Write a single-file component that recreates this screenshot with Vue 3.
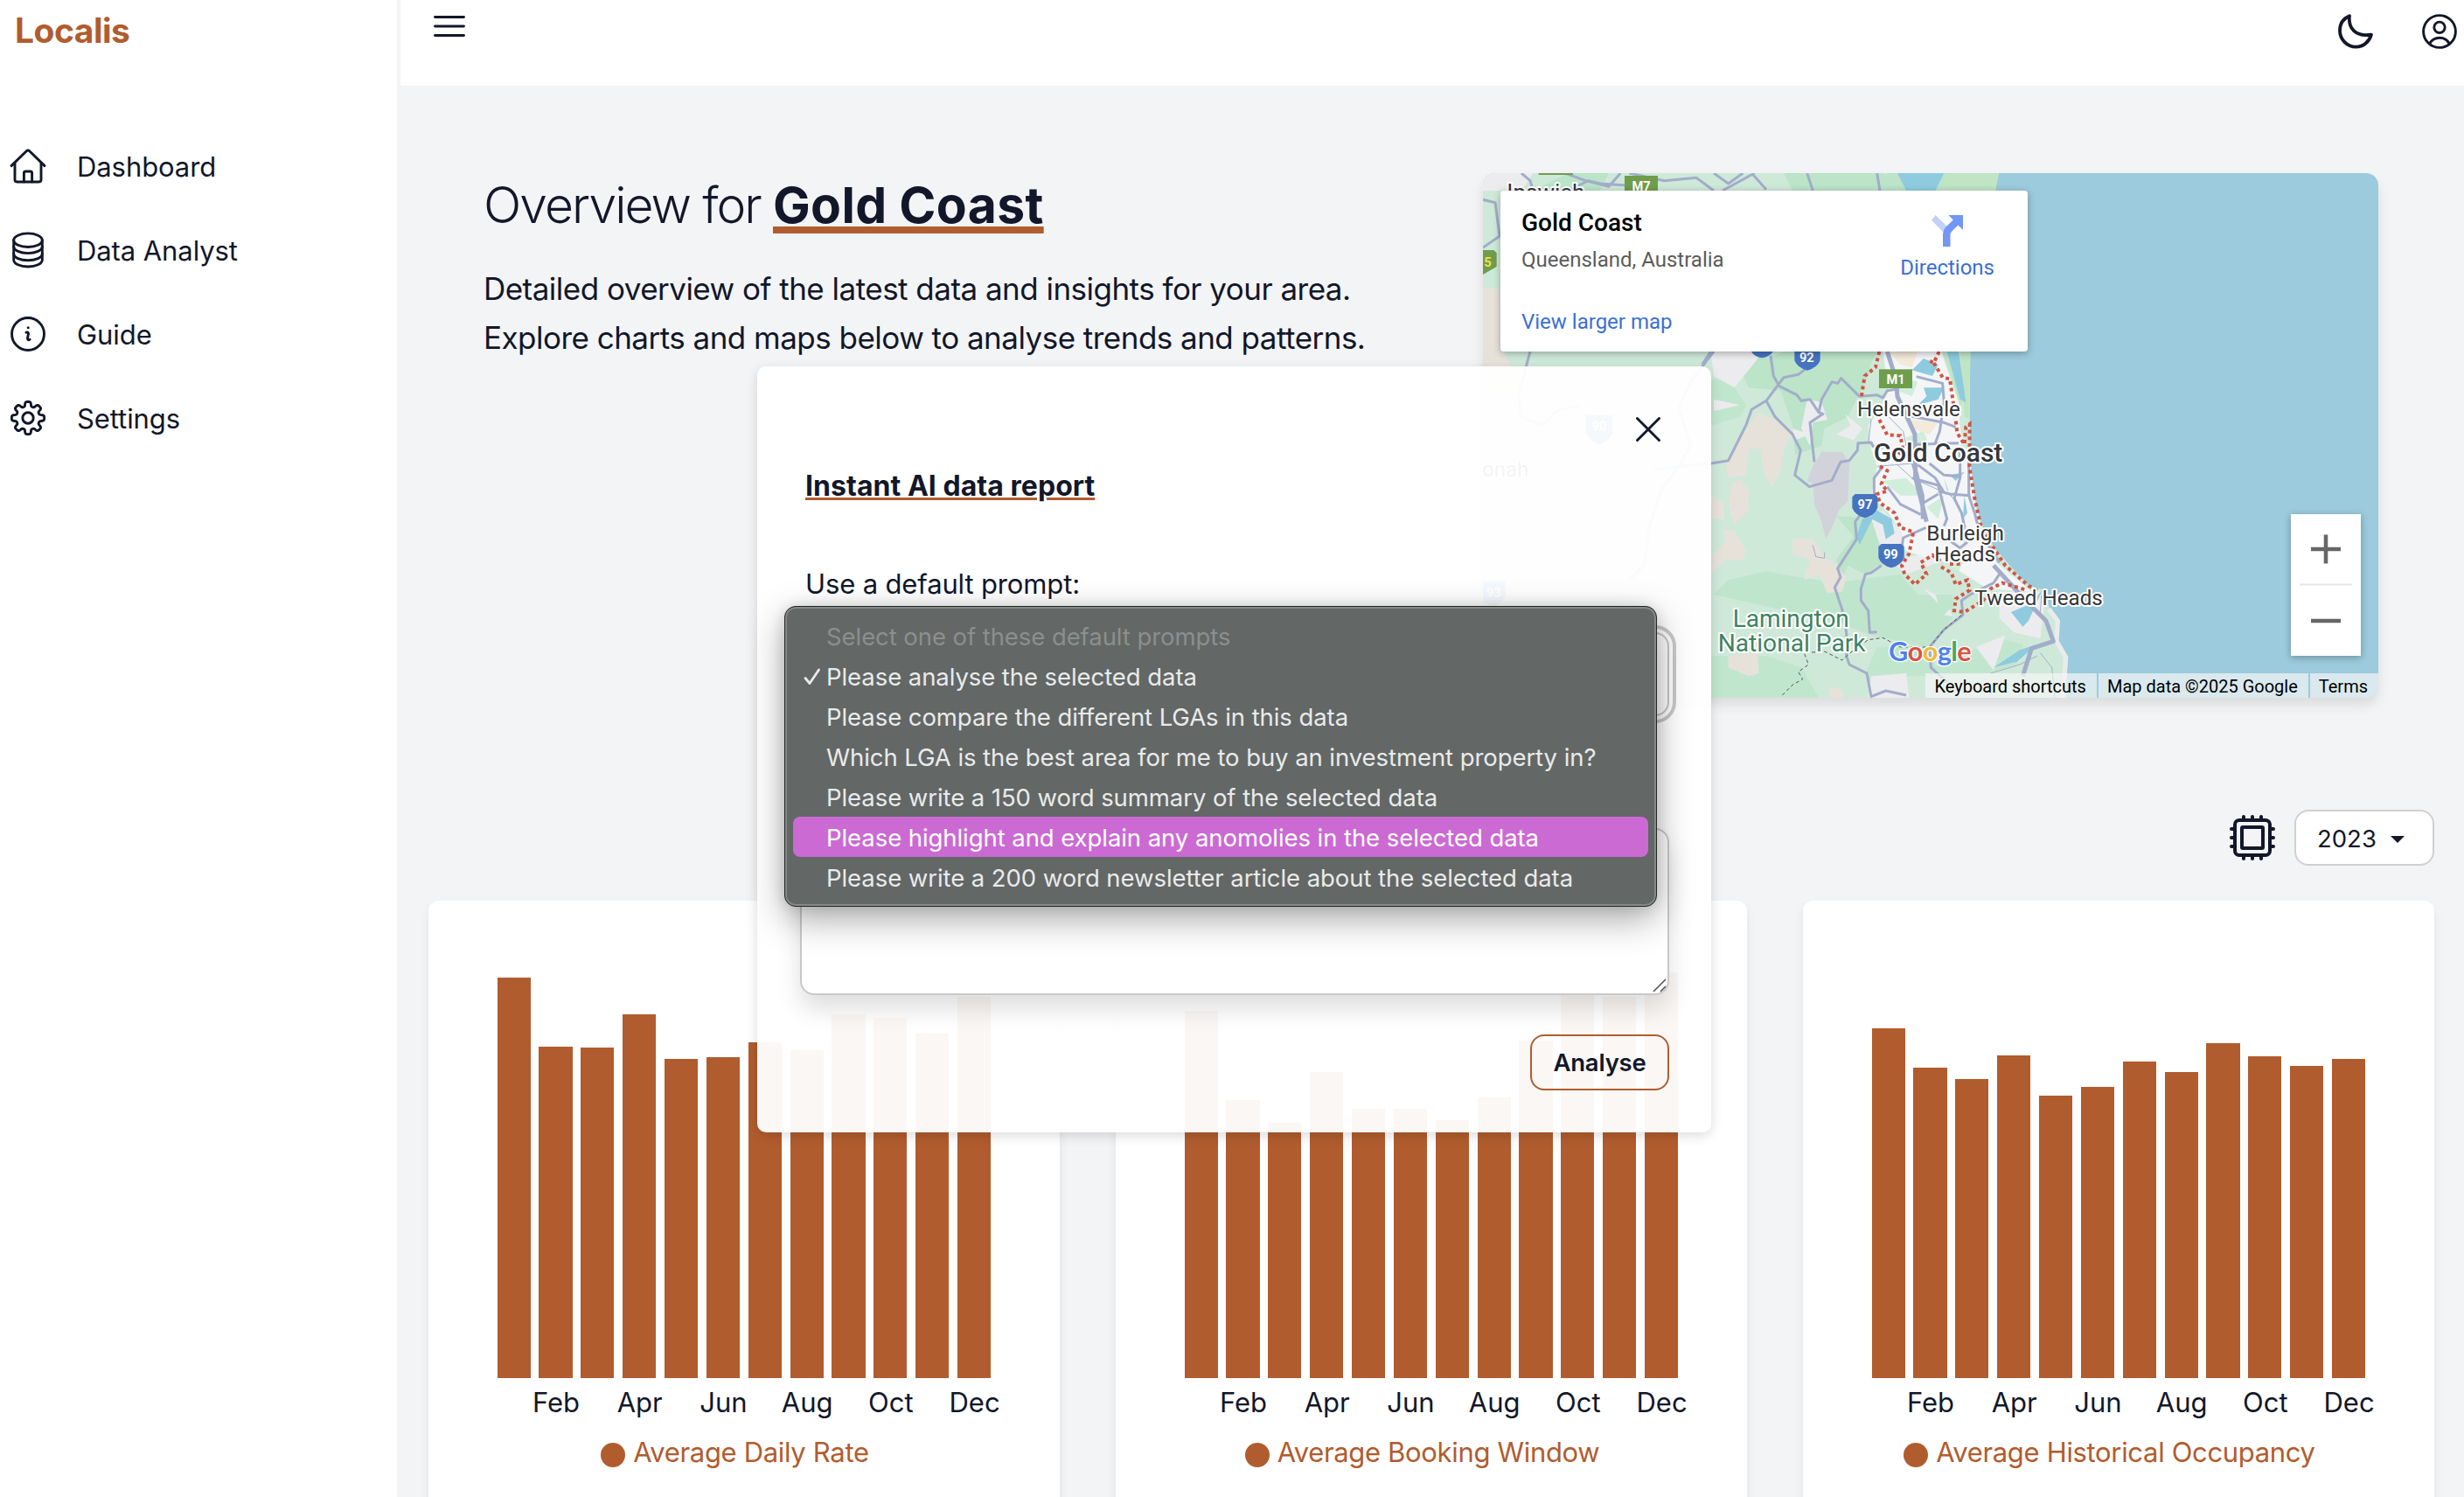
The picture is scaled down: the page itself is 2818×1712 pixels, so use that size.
<script setup>
const navItems = [
  { label: 'Dashboard', icon: 'home' },
  { label: 'Data Analyst', icon: 'database' },
  { label: 'Guide', icon: 'info' },
  { label: 'Settings', icon: 'gear' },
]

// Closed outline of an eight-toothed cog, centred in a 48-unit box.
const gearPath = (() => {
  const points = []
  for (let i = 0; i < 128; i++) {
    const a = (i / 128) * Math.PI * 2
    const r = 16 + 2.6 * Math.tanh(2.4 * (Math.cos(8 * a) + 0.15))
    points.push(`${(24 + r * Math.cos(a)).toFixed(2)} ${(24 + r * Math.sin(a)).toFixed(2)}`)
  }
  return `M${points.join('L')}Z`
})()

const months = ['', 'Feb', '', 'Apr', '', 'Jun', '', 'Aug', '', 'Oct', '', 'Dec']

const charts = [
  { title: 'Average Daily Rate', values: [458, 379, 378.5, 416, 365.5, 367, 384, 375, 416, 412, 394, 436] },
  { title: 'Average Booking Window', values: [420.5, 318.5, 292, 350, 308, 308, 295, 321, 386.5, 446, 436.5, 464.5] },
  { title: 'Average Historical Occupancy', values: [400.5, 355, 342, 369, 323.5, 333, 362, 350.5, 383, 368, 357, 365.5] },
]

const prompts = [
  { text: 'Select one of these default prompts', disabled: true },
  { text: 'Please analyse the selected data', checked: true },
  { text: 'Please compare the different LGAs in this data' },
  { text: 'Which LGA is the best area for me to buy an investment property in?' },
  { text: 'Please write a 150 word summary of the selected data' },
  { text: 'Please highlight and explain any anomolies in the selected data', active: true },
  { text: 'Please write a 200 word newsletter article about the selected data' },
]
</script>

<template>
  <div class="app">
    <aside class="sidebar">
      <div class="brand">Localis</div>
      <nav class="nav">
        <a v-for="item in navItems" :key="item.label" class="nav-item">
          <svg class="nav-icon" viewBox="0 0 48 48">
            <template v-if="item.icon === 'home'">
              <path d="M5 23.6 22.3 6.7q1.7-1.5 3.4 0L43 23.6" />
              <path d="M9 20.5V39.6q0 2.4 2.4 2.4H36.6q2.4 0 2.4-2.4V20.5" />
              <path d="M19.4 42V32q0-2 2-2h5.2q2 0 2 2V42" />
            </template>
            <template v-else-if="item.icon === 'database'">
              <ellipse cx="24" cy="12.7" rx="16.3" ry="7.8" />
              <path d="M7.7 12.7V35.2A16.3 7.8 0 0 0 40.3 35.2V12.7" />
              <path d="M7.7 20A16.3 7.6 0 0 0 40.3 20M7.7 28.2A16.3 7.6 0 0 0 40.3 28.2" />
            </template>
            <template v-else-if="item.icon === 'info'">
              <circle cx="24" cy="24" r="18.5" />
              <circle class="solid" cx="24.2" cy="16.8" r="1.5" />
              <path d="M22 22.2c1.6-.7 2.9 0 2.5 1.8l-1 4.6c-.3 1.9.9 2.6 2.6 1.7" />
            </template>
            <template v-else>
              <path :d="gearPath" />
              <circle cx="24" cy="24" r="6.2" />
            </template>
          </svg>
          <span>{{ item.label }}</span>
        </a>
      </nav>
    </aside>

    <div class="page">
      <header class="topbar">
        <svg class="menu" viewBox="0 0 36 26">
          <path d="M1.5 2.5H34.5M1.5 13H34.5M1.5 23.5H34.5" />
        </svg>
        <div class="top-actions">
          <svg class="top-icon moon" viewBox="0 0 40 40">
            <path d="M13 2.2C11.4 16 19.5 26.4 38 23.6 35.4 32 28.8 37.7 20.5 37.7A18.6 18.6 0 0 1 2 19C2 11.2 6.3 5 13 2.2Z" />
          </svg>
          <svg class="top-icon" viewBox="0 0 40 40">
            <circle cx="20" cy="20" r="18.4" />
            <circle cx="20" cy="15.3" r="6.2" />
            <path d="M8.6 34C11 29.4 15 27.2 20 27.2S29 29.4 31.4 34" />
          </svg>
        </div>
      </header>

      <main>
        <section class="hero">
          <div class="intro">
            <h1><span class="light">Overview for </span><span class="place">Gold Coast</span></h1>
            <p>Detailed overview of the latest data and insights for your area.<br />Explore charts and maps below to analyse trends and patterns.</p>
          </div>

          <div class="map">
            <svg class="map-art" viewBox="-732 -546 3072 1800" preserveAspectRatio="none">
              <rect x="-732" y="-546" width="3072" height="1800" fill="#9bcbdc" />
              <path class="land" d="M-732-546H1038L990-300 965-100 940 66 938 290 938 310 942 450 958 590 985 670 1020 735 1080 805 1140 868 1195 885 1212 945 1235 990 1242 1060 1275 1115 1268 1254H-732Z" />
              <g fill="#bbe4c9">
                <path d="M120 66 250 90 300 66H560L600 130 560 210 520 290 440 330 430 390 340 420 330 320 290 200 180 190Z" />
                <path d="M300 66H620L560 190 480 160 440 250 400 260 350 220 280 170Z" />
                <path d="M480 630 640 640 720 700 700 790 620 800 580 830 520 800 500 850 480 780 540 700Z" />
                <path d="M240 820 470 860 700 830 760 900 880 900 880 980 790 1080 600 1040 500 1000 330 960 60 900 110 850Z" opacity=".8" />
                <path d="M620 1080 800 1080 820 1150 1040 1050 1120 1070 1100 1140 1000 1170 720 1180 600 1240 580 1170Z" opacity=".7" />
                <path d="M50 320 150 290 170 250 120 170 50 160Z" opacity=".7" />
                <path d="M52 1110 240 1110 360 1150 420 1254H52Z" opacity=".7" />
                <path d="M-440-546-300-546-330-486H-560ZM300-546 640-546 760-486H330ZM650-546 860-546V-486H700Z" />
                <path d="M620 300 700 350 710 380 640 420 600 380Z" />
                <path d="M640 510 740 510 800 600 740 600 700 560Z" />
              </g>
              <g fill="#ececee">
                <path d="M50 66H230L180 130 130 190 60 150Z" />
                <path d="M380 230 430 240 450 300 400 310 390 390 360 330ZM330 330 390 350 340 370ZM510 280 570 330 540 370 480 350 530 320Z" />
                <path d="M600 640 640 610 700 680 720 740 690 780 780 760 830 790 720 830 640 760ZM780 880 830 930 820 900ZM850 970 870 950 880 975ZM60 230 150 250 60 270Z" />
                <path d="M-732-546H-560L-600-486H-732Z" />
                <path d="M1040 890 1200 890 1180 1050 1090 1030 1040 980ZM960 1080 1060 1040 1020 1160ZM600 1180 720 1170 730 1254H590Z" />
              </g>
              <path fill="#d2d3da" d="M430 410 500 410 525 450 520 580 490 610 470 660 445 710 430 650 405 590 400 520 380 510 400 460Z" />
              <g fill="#e6e2da">
                <path d="M210 275 270 300 330 350 300 400 290 470 260 530 230 480 220 400 180 400 170 490 110 500 100 450 160 350Z" />
                <path d="M150 505 180 540 180 610 130 660 110 590 120 520ZM330 710 400 710 440 770 480 800 515 840 500 890 450 895 420 830 370 850 390 780 330 760ZM95 680 130 680 170 750 160 780 100 780 50 830 50 770 100 720Z" />
                <path d="M110 1110 210 1100 215 1170 180 1180 110 1150ZM455 1220 490 1220 510 1254H460ZM50 560 90 580 95 640 55 640Z" />
                <path d="M-732-150H-640L-660 66-600 200H-732Z" />
              </g>
              <path fill="#f4f5f7" d="M640 66H840L900 240 905 330 940 450 960 600 985 690 1030 790 1080 830 1150 890 1000 880 920 830 860 790 780 770 720 750 700 680 660 620 600 560 620 460 600 400 590 320 620 280 660 200Z" />
              <g fill="#cfeedb">
                <path d="M690 150 760 170 740 220 690 200ZM720 360 780 340 800 390 720 400ZM640 510 720 500 780 560 700 560ZM790 600 850 560 830 640ZM870 400 930 380 900 440ZM840 760 930 760 900 820Z" />
              </g>
              <path fill="#f3ead9" d="M660 66 760 66 740 120 700 110ZM730 300 830 310 800 350 740 330Z" />
              <path fill="#bfe5c5" d="M845 66H885L925 230 905 250ZM905 66H941L934 295 920 290ZM860-546H1038L1025-486H840Z" />
              <g fill="#8fcbdf">
                <path d="M780 90 830 110 810 150 740 130ZM780 190 850 190 830 230 760 250 790 220ZM600 600 670 640 680 690 650 710 640 660 600 640ZM570 640 610 630 560 730 550 700Z" />
                <path d="M690-546H850L820-486H720ZM860 66 900 66 925 240 905 230ZM850 500 870 560 900 590 860 540ZM920 560 930 620 915 640Z" />
                <path d="M1080 960 1150 930 1190 880 1140 990 1120 1010ZM1110 1090 1170 1070 1100 1130 1020 1150ZM870 490 920 480 890 510Z" />
              </g>
              <path fill="none" stroke="#e9ebec" stroke-width="16" d="M1210 950 1240 990 1236 1060 1268 1115 1256 1254" />

              <g class="road thin">
                <path d="M660 290 710 340 720 390M690 455 740 500 830 540M1010 1170 1110 1140 1170 1110M1180 1100 1220 1150 1230 1254M400 730 410 770 440 775 440 755M1185 900 1180 960 1215 1010" />
                <path d="M600 300 590 380 640 400M620 460 680 455 740 450" />
              </g>
              <g class="road">
                <path d="M50 66 20 110M255 80 265 150 285 185 345 215 360 235 390 230 420 275 435 280 390 310 400 400 405 445" />
                <path d="M395 110 350 145 300 155 240 235 190 265 170 320 110 440 50 450-150 470" />
                <path d="M240 235 270 290 330 350 358 405 338 490 388 530 465 508 495 445 525 440 553 405 555 380 600 378 608 395" />
                <path d="M420 275 430 230 465 170 485 175 497 158 560 220 620 215 640 225 655 200 690 195M755 152 845 175 850 240 835 340 820 380M720 285 850 310 890 325" />
                <path d="M640 460 610 500 610 560 560 630 545 650 550 710 485 810 495 840 475 875 500 950 515 1030 515 1110 525 1140 585 1170 600 1250 650 1230 720 1245" />
                <path d="M635 800 600 825 580 830 565 880 565 920 590 955 595 1030 620 1028" />
                <path d="M655 530 700 590 770 625M740 500 830 525 860 640 850 665M800 450 850 490 910 495M830 545 870 555 940 560M780 585 830 555M905 400 905 500 885 570 910 620 920 665 915 720" />
                <path d="M788 670 710 705 705 740M870 715 905 740 930 720M1040 830 1020 860 940 900 910 920 915 970 850 1020 800 1080 805 1150 860 1200" />
                <path d="M935 400V560L955 620 970 680 1040 790M760 455 820 500 850 550M750 385 900 380" />
                <path d="M-600-546-570-520-560-486M-450-546-380-520-300-500-260-546M-230-546-110-520 0-530 60-486M60-546 110-510 160-546M190-546 240-490M380-546 400-486M620-546 630-486M-440-486-370-520-330-510-180-500M90-486 200-546" />
                <path d="M-732-455-690-445-675-330-732-290M-570 66-590 140-610 220-600 290-530 320-480 270-400 250M60 66-20 170-60 260-20 390-60 460-120 540-160 660-180 800-230 850" />
              </g>
              <g class="road thick">
                <path d="M655 66 685 160 690 220 750 350 752 500 790 650M745 450 775 560 778 640M1020 800 1130 920 1200 990 1225 1060 1150 1085 1120 1180" />
              </g>
              <g class="border-line">
                <path d="M628 66 615 120 578 150 565 230M628 300 655 352 700 355 708 395 695 420M630 460 655 475 635 520 655 545 620 555 630 585 680 620 700 670 745 685 730 760 705 800 715 830 750 865 790 830 770 790 810 765 845 790M840 805 875 825 890 865 930 850 938 885 890 915 885 955 920 960 985 920 1010 880 1050 860 1135 885" />
                <path d="M833 66 815 105 795 95M815 105 845 155 870 160 890 300 895 345 920 385 925 325 938 315 937 460 955 570 975 660 1020 740 1060 800 1140 870 1180 890M905 795 860 795" />
              </g>
              <path fill="none" stroke="#4e5a54" stroke-width="3" stroke-dasharray="12 9" d="M295 1245 330 1210 365 1190 350 1165 385 1140 370 1100 440 1095 500 1125 540 1090 590 1055 640 1048 700 1080 800 1080 850 1020 910 970" />

              <g class="shield">
                <path d="M535 565 545 555H612L622 565V602Q612 628 579 637 545 628 535 602Z" />
                <path d="M625 736 635 726H703L713 736V773Q703 799 669 808 635 799 625 773Z" />
                <path d="M337 50H425V97Q415 122 381 131 347 122 337 97ZM190 40H262V68Q250 84 226 88 200 84 190 68Z" />
                <path d="M-378 285H-288V345Q-298 375-333 385-368 375-378 345ZM-732 855H-655V905Q-665 930-695 940-732 930-732 915Z" />
              </g>
              <g class="motorway">
                <rect x="627" y="127" width="114" height="65" />
                <rect x="-246" y="-537" width="114" height="65" />
                <rect x="-541" y="-560" width="118" height="20" />
                <path d="M-732-282H-695L-685-272V-225L-732-198Z" />
              </g>
              <g class="shield-text">
                <text x="579" y="607">97</text>
                <text x="667" y="777">99</text>
                <text x="379" y="101">92</text>
                <text x="-333" y="336">90</text>
                <text x="-695" y="908">93</text>
                <text x="684" y="178">M1</text>
                <text x="-189" y="-487">M7</text>
                <text class="yellow" x="-716" y="-226">5</text>
              </g>
              <g class="label">
                <text x="-650" y="-453" font-size="78">Ipswich</text>
                <text x="552" y="287" font-size="72.500">Helensvale</text>
                <text x="790" y="714" font-size="73">Burleigh</text>
                <text x="817" y="787" font-size="73">Heads</text>
                <text x="955" y="937" font-size="72.500">Tweed Heads</text>
                <text x="-735" y="495" font-size="72">onah</text>
                <text class="city" x="608" y="443" font-size="90">Gold Coast</text>
                <text class="park" x="125" y="1010" font-size="84">Lamington</text>
                <text class="park" x="74" y="1094" font-size="84.500">National Park</text>
              </g>
              <text class="google" x="660" y="1128" textLength="284"><tspan fill="#4f82ec">G</tspan><tspan fill="#dc5143">o</tspan><tspan fill="#edb83d">o</tspan><tspan fill="#4f82ec">g</tspan><tspan fill="#4ba659">l</tspan><tspan fill="#dc5143">e</tspan></text>
            </svg>

            <div class="place-card">
              <div class="place-info">
                <strong>Gold Coast</strong>
                <span class="region">Queensland, Australia</span>
                <a>View larger map</a>
              </div>
              <div class="directions">
                <svg viewBox="0 0 36 36">
                  <path fill="#c2d1fb" d="M4.6 0 0 5.8 13.4 19.5 18.5 13.6Z" />
                  <path fill="#7297f4" d="M13 36V24C13 18.5 14.5 15.5 18 12L24.8 5.5 19.4 0H36V17L30.5 11.4 24 17.8C22 19.8 21.5 21 21.5 24V36Z" />
                </svg>
                <a>Directions</a>
              </div>
            </div>

            <div class="zoom">
              <svg viewBox="0 0 80 162">
                <path stroke="#666" stroke-width="4.500" d="M23 40H57M40 23.5V56.5M23 122H57" />
                <path stroke="#e6e6e6" stroke-width="2" d="M10 80.5H70" />
              </svg>
            </div>

            <div class="map-footer">
              <span>Keyboard shortcuts</span><span>Map data ©2025 Google</span><span>Terms</span>
            </div>
          </div>
        </section>

        <section class="toolbar">
          <svg class="chip" viewBox="-26 -26 52 52">
            <rect x="-20" y="-20" width="40" height="40" rx="5" />
            <rect x="-12" y="-12" width="24" height="24" rx="1" />
            <path d="M-10-21V-24M0-21V-24M10-21V-24M-10 21V24M0 21V24M10 21V24M-21-10H-24M-21 0H-24M-21 10H-24M21-10H24M21 0H24M21 10H24" />
          </svg>
          <div class="year">
            <span>2023</span>
            <svg viewBox="0 0 16 8"><path d="M0 0H16L8 8Z" /></svg>
          </div>
        </section>

        <section class="charts">
          <article v-for="chart in charts" :key="chart.title" class="chart">
            <div class="bars">
              <div v-for="(v, i) in chart.values" :key="i" class="bar" :style="{ height: v + 'px' }"></div>
            </div>
            <div class="months">
              <span v-for="(m, i) in months" :key="i">{{ m }}</span>
            </div>
            <div class="legend"><i></i>{{ chart.title }}</div>
          </article>
        </section>
      </main>
    </div>

    <div class="modal">
      <div class="modal-head">
        <svg class="close" viewBox="0 0 28 28"><path d="M1.5 1.5 26.5 26.5M26.5 1.5 1.5 26.5" /></svg>
      </div>
      <h2>Instant AI data report</h2>
      <label>Use a default prompt:</label>
      <div class="select"></div>
      <div class="textarea">
        <svg viewBox="0 0 16 16"><path d="M1 15 15 1M9 15 15 9" /></svg>
      </div>
      <div class="actions"><button>Analyse</button></div>

      <ul class="menu-list">
        <li v-for="p in prompts" :key="p.text" :class="{ disabled: p.disabled, active: p.active }">
          <span class="tick">
            <svg v-if="p.checked" viewBox="0 0 20 20"><path d="M2 11.5 7 17.5 17.5 2" /></svg>
          </span>
          {{ p.text }}
        </li>
      </ul>
    </div>
  </div>
</template>

<style>
body {
  margin: 0;
}
</style>

<style scoped>
* {
  box-sizing: border-box;
}

.app {
  position: relative;
  display: flex;
  width: 2818px;
  height: 1712px;
  overflow: hidden;
  background: #f3f4f6;
  color: #12172a;
  font: 400 31px/40px Inter, sans-serif;
}

.sidebar {
  flex: none;
  width: 458px;
  background: #fff;
  border-right: 4px solid #f3f4f6;
}

.brand {
  height: 142px;
  padding: 5px 0 0 17px;
  color: #b15c2e;
  font-size: 39px;
  font-weight: 700;
  line-height: 60px;
  letter-spacing: -0.5px;
}

.nav {
  display: flex;
  flex-direction: column;
}

.nav-item {
  display: flex;
  align-items: center;
  gap: 32px;
  height: 96px;
  padding-left: 8px;
  letter-spacing: -0.08px;
}

.nav-item span {
  padding-top: 2px;
}

.nav-icon {
  width: 48px;
  height: 48px;
}

svg {
  display: block;
  flex: none;
}

.nav-icon,
.menu,
.top-icon,
.chip,
.close {
  fill: none;
  stroke: #12172a;
  stroke-width: 2.9;
  stroke-linecap: round;
  stroke-linejoin: round;
}

.nav-icon .solid {
  fill: #12172a;
  stroke: none;
}

.page {
  flex: 1;
}

.topbar {
  display: flex;
  justify-content: space-between;
  height: 98px;
  padding: 16px 8px 0 38px;
  background: #fff;
}

.menu {
  width: 36px;
  height: 26px;
  margin-top: 1px;
}

.top-actions {
  display: flex;
  gap: 56px;
}

.top-icon {
  width: 40px;
  height: 40px;
}

.top-icon.moon {
  stroke-width: 3.8;
}

.hero {
  display: flex;
  justify-content: space-between;
  padding: 100px 98px 0 95px;
}

.intro {
  margin-top: -3px;
}

h1 {
  margin: 0 0 27px;
  font-size: 57px;
  line-height: 80px;
  font-weight: 700;
  white-space: pre;
}

.light {
  font-weight: 340;
  letter-spacing: -1.95px;
}

.place {
  letter-spacing: 0.35px;
  text-decoration: underline #b15c2e 8px;
  text-underline-offset: 4px;
  text-decoration-skip-ink: none;
}

.intro p {
  margin: 0;
  font-size: 35px;
  line-height: 56px;
  letter-spacing: -0.52px;
}

.map {
  position: relative;
  width: 1024px;
  height: 600px;
  border-radius: 14px;
  overflow: hidden;
  font-family: Roboto, sans-serif;
  box-shadow: 0 8px 14px rgba(0, 0, 0, 0.1);
}

.map-art {
  width: 1024px;
  height: 600px;
}

.land {
  fill: #cfe9d9;
}

.road {
  fill: none;
  stroke: #a2adca;
  stroke-width: 9;
  stroke-linejoin: round;
}

.road.thin {
  stroke-width: 3;
}

.road.thick {
  stroke-width: 15;
}

.border-line {
  fill: none;
  stroke: #d05544;
  stroke-width: 12;
  stroke-dasharray: 12 11;
}

.shield {
  fill: #4674c1;
}

.motorway {
  fill: #709d4c;
}

.shield-text {
  fill: #fff;
  font: 700 44px Roboto, sans-serif;
  text-anchor: middle;
}

.shield-text .yellow {
  fill: #f0e04a;
}

.label {
  fill: #33363a;
  stroke: #fff;
  stroke-width: 12;
  stroke-linejoin: round;
  paint-order: stroke;
  font-family: Roboto, sans-serif;
}

.label .city {
  font-weight: 500;
}

.label .park {
  fill: #3e8362;
}

.google {
  font: 700 92px Lato, sans-serif;
  stroke: #fff;
  stroke-width: 8;
  paint-order: stroke;
}

.place-card {
  position: absolute;
  top: 20px;
  left: 20px;
  display: flex;
  justify-content: space-between;
  width: 603px;
  height: 184px;
  padding: 23px 38px 0 24px;
  border-radius: 4px;
  background: #fff;
  box-shadow: 0 2px 8px rgba(0, 0, 0, 0.3);
  font-size: 24px;
  line-height: 28px;
}

.place-info {
  display: flex;
  flex-direction: column;
}

.place-info strong {
  color: #000;
  font-size: 28px;
  font-weight: 500;
  line-height: 28px;
}

.region {
  margin-top: 14px;
  color: #5b5b5b;
}

.place-card a {
  color: #3a70d6;
}

.place-info a {
  margin-top: 43px;
}

.directions {
  display: flex;
  flex-direction: column;
  align-items: center;
  padding-top: 5px;
}

.directions svg {
  width: 36px;
  height: 36px;
  margin-bottom: 10px;
}

.zoom {
  position: absolute;
  right: 20px;
  bottom: 48px;
  width: 80px;
  height: 162px;
  background: #fff;
  box-shadow: 0 2px 8px rgba(0, 0, 0, 0.3);
}

.map-footer {
  position: absolute;
  right: 0;
  bottom: 0;
  display: flex;
  gap: 2px;
  color: #000;
  font-size: 20px;
  line-height: 30px;
}

.map-footer span {
  height: 28px;
  padding: 0 12px 0 10px;
  background: rgba(245, 245, 245, 0.7);
}

.toolbar {
  display: flex;
  justify-content: flex-end;
  align-items: center;
  gap: 22px;
  height: 64px;
  margin-top: 128px;
  padding-right: 34px;
}

.chip {
  width: 52px;
  height: 52px;
  stroke-width: 4;
}

.year {
  display: flex;
  align-items: center;
  gap: 16px;
  width: 160px;
  height: 64px;
  padding: 2px 0 0 24px;
  border: 2px solid #d0d0d0;
  border-radius: 16px;
  background: #fff;
  font-size: 27.5px;
}

.year svg {
  width: 16px;
  height: 8px;
  margin-top: 1px;
  fill: #12172a;
}

.charts {
  display: flex;
  gap: 64px;
  padding: 40px 34px 0 32px;
}

.chart {
  flex: 1;
  height: 760px;
  border-radius: 12px;
  background: #fff;
  box-shadow: 0 6px 12px rgba(0, 0, 0, 0.07);
}

.bars {
  display: flex;
  align-items: flex-end;
  gap: 9.66px;
  height: 546px;
  padding-left: 78.6px;
}

.bar {
  width: 38.2px;
  background: #b15c2e;
}

.months {
  display: flex;
  height: 48px;
  padding: 8px 0 0 74.2px;
}

.months span {
  display: flex;
  justify-content: center;
  width: 47.86px;
}

.legend {
  display: flex;
  justify-content: center;
  align-items: center;
  gap: 9px;
  height: 78px;
  margin-top: -2px;
  padding-right: 21px;
  color: #b15c2e;
  letter-spacing: -0.33px;
}

.legend i {
  width: 28px;
  height: 28px;
  margin-top: 5px;
  border-radius: 50%;
  background: #b15c2e;
}

.modal {
  position: absolute;
  top: 419px;
  left: 866px;
  width: 1091px;
  height: 876px;
  padding: 48px 48px 48px 49px;
  border-radius: 10px;
  background: rgba(255, 255, 255, 0.95);
  box-shadow: 0 4px 14px rgba(0, 0, 0, 0.14);
}

.modal-head {
  display: flex;
  justify-content: flex-end;
  height: 48px;
  padding: 10px 10px 0 0;
}

.close {
  width: 28px;
  height: 28px;
}

.modal h2 {
  margin: 21px 0 0 6px;
  font-size: 32px;
  line-height: 40px;
  font-weight: 700;
  letter-spacing: 0.05px;
  text-decoration: underline #b15c2e 3px;
  text-underline-offset: 2px;
}

.modal label {
  display: block;
  margin: 72px 0 0 6px;
  letter-spacing: -0.14px;
}

.select {
  height: 96px;
  margin-top: 35px;
  border: 2px solid #c4c4c4;
  border-radius: 16px;
  outline: 4px solid #c8c8c8;
  outline-offset: 4px;
  background: #fff;
}

.textarea {
  display: flex;
  justify-content: flex-end;
  align-items: flex-end;
  height: 191px;
  margin-top: 128px;
  padding: 0 1px 1px 0;
  border: 2px solid #c9c9cb;
  border-radius: 16px;
  background: #fff;
  box-shadow: 0 16px 28px rgba(0, 0, 0, 0.13);
}

.textarea svg {
  width: 16px;
  height: 16px;
  stroke: #555;
  stroke-width: 1.6;
}

.actions {
  display: flex;
  justify-content: flex-end;
  margin-top: 45px;
}

.actions button {
  width: 159px;
  height: 64px;
  padding: 0;
  border: 2px solid #b15c2e;
  border-radius: 16px;
  background: transparent;
  color: #12172a;
  font: 600 27.5px Inter, sans-serif;
  letter-spacing: -0.2px;
}

.menu-list {
  position: absolute;
  top: 274px;
  left: 31px;
  width: 998px;
  height: 344px;
  margin: 0;
  padding: 10px 9px;
  border: 1.5px solid #222524;
  border-radius: 13px;
  background: #636766;
  box-shadow: inset 0 0 0 2px #858a88, 0 14px 40px rgba(0, 0, 0, 0.34), 0 0 16px rgba(0, 0, 0, 0.12);
  color: #e9ebea;
  font-size: 27.5px;
  letter-spacing: -0.07px;
  list-style: none;
}

.menu-list li {
  display: flex;
  align-items: center;
  height: 46px;
  padding-top: 1px;
  border-radius: 8px;
  white-space: nowrap;
}

.tick {
  width: 38px;
  padding-left: 12px;
}

.tick svg {
  width: 20px;
  height: 20px;
  fill: none;
  stroke: #e9ebea;
  stroke-width: 2.8;
  stroke-linecap: round;
  stroke-linejoin: round;
}

.menu-list .disabled {
  color: #8b8f8e;
}

.menu-list .active {
  background: #cb6ad3;
  color: #fff;
}
</style>
